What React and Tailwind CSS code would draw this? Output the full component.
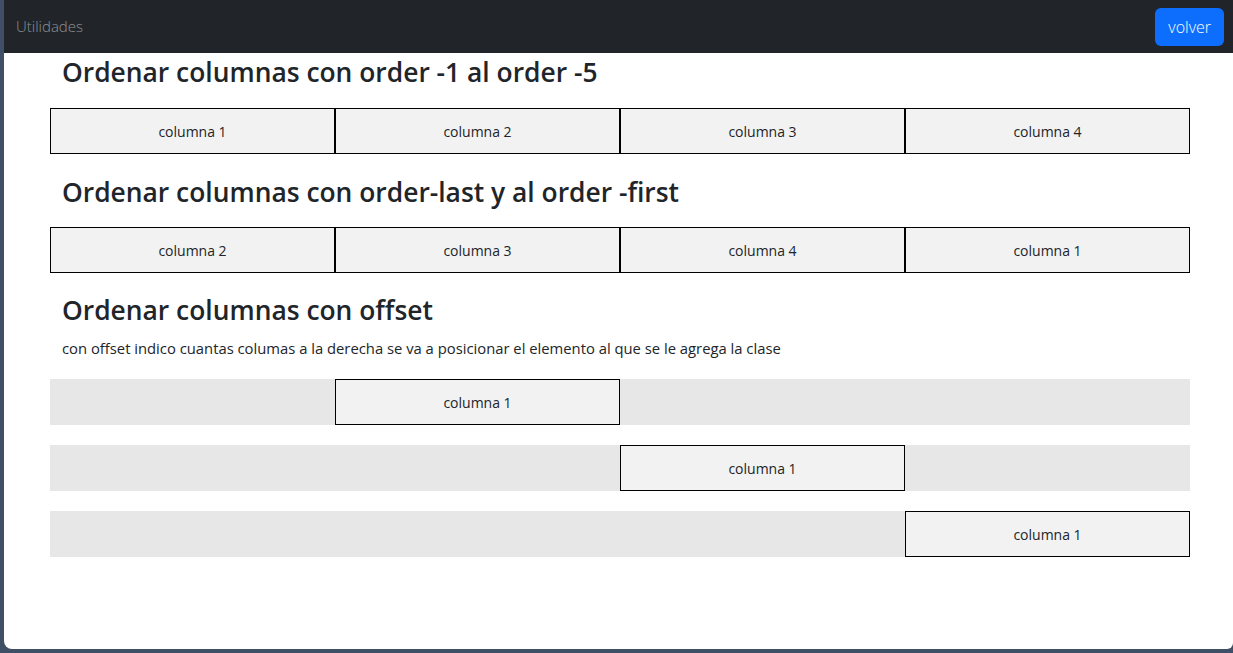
import React from "react";

const Col = ({ children }) => (
  <div className="flex h-[46px] items-center justify-center border border-black bg-[#f2f2f2] text-[14px] text-[#212529]">
    {children}
  </div>
);

const OffsetRow = ({ start }) => (
  <div className="grid grid-cols-4 bg-[#e7e7e7]">
    <div className={start}>
      <Col>columna 1</Col>
    </div>
  </div>
);

export default function App() {
  return (
    <div
      className="flex h-[653px] w-[1233px] flex-col bg-[#3e4f66] pb-[4px] pl-[4px]"
      style={{ fontFamily: '"Open Sans", "Noto Sans", sans-serif' }}
    >
      <nav className="flex h-[53px] shrink-0 items-center justify-between bg-[#212529] pl-[12px] pr-[9px]">
        <span className="text-[15px] font-light text-[#8f9296]">Utilidades</span>
        <button className="h-[38px] rounded-md bg-[#0d6efd] px-[13px] text-[16px] font-light text-white">
          volver
        </button>
      </nav>

      <main className="flex-1 rounded-bl-lg rounded-br-md bg-white">
        <div className="ml-[46px] w-[1140px]">
          <h3 className="px-3 pt-[3px] text-[26.4px] font-semibold leading-[32px] text-[#212529]">
            Ordenar columnas con order -1 al order -5
          </h3>
          <div className="mt-[20px] grid grid-cols-4">
            <Col>columna 1</Col>
            <Col>columna 2</Col>
            <Col>columna 3</Col>
            <Col>columna 4</Col>
          </div>

          <h3 className="mt-[22px] px-3 text-[26.4px] font-semibold leading-[32px] text-[#212529]">
            Ordenar columnas con order-last y al order -first
          </h3>
          <div className="mt-[19px] grid grid-cols-4">
            <Col>columna 2</Col>
            <Col>columna 3</Col>
            <Col>columna 4</Col>
            <Col>columna 1</Col>
          </div>

          <h3 className="mt-[21px] px-3 text-[26.4px] font-semibold leading-[32px] text-[#212529]">
            Ordenar columnas con offset
          </h3>
          <p className="mt-[12px] px-3 text-[14.8px] leading-[20px] text-[#212529]">
            con offset indico cuantas columas a la derecha se va a posicionar el elemento al que se le agrega la clase
          </p>

          <div className="mt-[21px] flex flex-col gap-[20px]">
            <OffsetRow start="col-start-2" />
            <OffsetRow start="col-start-3" />
            <OffsetRow start="col-start-4" />
          </div>
        </div>
      </main>
    </div>
  );
}
